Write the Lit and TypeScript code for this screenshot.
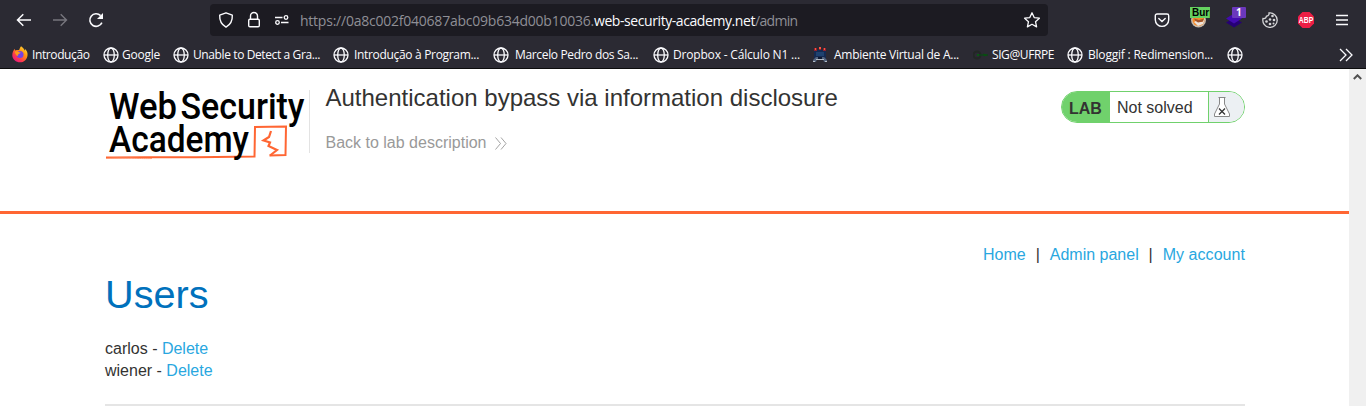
import { LitElement, html, css } from "lit";
import { customElement } from "lit/decorators.js";

const globe = html`<svg width="16" height="16" viewBox="0 0 16 16" fill="none" stroke="#fbfbfe" stroke-width="1.3">
  <circle cx="8" cy="8" r="7" /><ellipse cx="8" cy="8" rx="3.3" ry="7" /><path d="M1 8h14" /></svg>`;

const firefox = html`<svg width="16" height="17" viewBox="0.5 0 16 17">
  <defs><linearGradient id="ff" x1="1" y1="0" x2="0.2" y2="1"><stop offset="0" stop-color="#fff44f" /><stop offset=".4" stop-color="#ff980e" /><stop offset=".75" stop-color="#ff3750" /><stop offset="1" stop-color="#e31587" /></linearGradient></defs>
  <path d="M9.6.3C12 2 12.7 3.200 12.800 4.500c.7-.3.6-1.200.5-1.700C15.500 4.500 16.300 6.900 16 9.400 15.500 13.400 12.400 16.300 8.500 16.300S.8 13.200.8 9.200c0-2.800 1.200-5 2.500-6.500 0 .8.100 1.300.5 1.700C4.800 4 6.600 4 7.600 4.100 8.200 2.500 8.600 1.300 9.600.3z" fill="url(#ff)" />
  <circle cx="8.500" cy="8.500" r="3.500" fill="#7542e5" /><path d="M3.200 5.500c1.600-.7 3.400-.3 4.600.7l1.500.4c-.3 1-1.700 1-2.300 1.500-.5.5 0 1.400-.9 2C4.800 9.500 3.500 7.500 3.200 5.500z" fill="#ff9a1a" /></svg>`;

const robot = html`<svg width="16" height="16" viewBox="0 0 16 16">
  <path d="M2 3h12v9H2z" fill="#152b52" /><path d="M4 5h8v4H4z" fill="#1f426f" />
  <path d="M2 1h3v3H2zM7 0h2v3H7zM11 1h3v3h-3z" fill="#8f2430" /><path d="M3 1h1v2H3zM7 0h2v2H7zM12 1h1v2h-1z" fill="#ff5340" />
  <path d="M1 13l3-3h8l3 3v2h-3l-1-3H5l-1 3H1z" fill="#53637d" /><path d="M4 12h8v1H4zM1 14h2v1H1zM13 14h2v1h-2z" fill="#b3bcc5" /><path d="M6 10h4v2H6z" fill="#101a32" /></svg>`;

const sig = html`<svg width="16" height="16" viewBox="0 0 16 16"><circle cx="4" cy="8" r="3.500" fill="none" stroke="#222725" stroke-width="2" /><path d="M4 8h11" stroke="#10421b" stroke-width="1.500" /><circle cx="5" cy="8" r="1" fill="#07600f" /><path d="M10 6.500l5 1.500-4 1.500z" fill="#07500f" /></svg>`;

const bookmarks = [
  { icon: firefox, label: "Introdução", width: 91, gap: 4, text: 57.5 },
  { icon: globe, label: "Google", width: 70, gap: 3, text: 38 },
  { icon: globe, label: "Unable to Detect a Gra...", width: 160, gap: 4, text: 127 },
  { icon: globe, label: "Introdução à Program...", width: 160, gap: 5, text: 125 },
  { icon: globe, label: "Marcelo Pedro dos Sa...", width: 160, gap: 6, text: 123 },
  { icon: globe, label: "Dropbox - Cálculo N1 ...", width: 159, gap: 4, text: 127 },
  { icon: robot, label: "Ambiente Virtual de A...", width: 161, gap: 6, text: 125 },
  { icon: sig, label: "SIG@UFRPE", width: 94, gap: 3, text: 62 },
  { icon: globe, label: "Bloggif : Redimension...", width: 160, gap: 5, text: 125 },
  { icon: globe, label: "", width: 20, gap: 0, text: 0 },
];

@customElement("browser-toolbar")
class BrowserToolbar extends LitElement {
  static styles = css`
    :host { display: block; height: 69px; background: #2b2a33; color: #fbfbfe; font-family: "Open Sans", "Noto Sans", sans-serif; box-sizing: border-box; border-bottom: 1px solid #0c0c0d; }
    svg { display: block; flex: none; }
    .top { height: 40px; display: flex; align-items: center; padding: 0 15px; box-sizing: border-box; }
    .nav { display: flex; gap: 18px; width: 195px; }
    .url { display: flex; align-items: center; height: 32px; width: 838px; box-sizing: border-box; background: #1c1b22; border-radius: 4px; padding: 0 7px; }
    .marks { display: flex; gap: 10px; width: 83px; }
    .address { flex: 1; display: flex; font-size: 14px; font-stretch: 96%; line-height: 20px; padding-top: 2px; white-space: pre; color: #8f8f96; }
    .address .host { color: #fbfbfe; }
    .ext { display: flex; gap: 18px; margin-left: auto; align-items: center; height: 32px; }
    .wide { overflow: visible; }
    .books { display: flex; height: 28px; align-items: center; padding: 1px 0 0 12px; box-sizing: border-box; }
    .book { display: flex; align-items: center; flex: none; white-space: pre; font-size: 12px; font-stretch: 91%; line-height: 16px; }
    .book span { padding-top: 1px; }
    .more { margin-left: auto; padding-right: 13px; }
  `;

  firstUpdated() {
    this.renderRoot.querySelectorAll<HTMLElement>("[data-fit]").forEach((el) => {
      const goal = Number(el.dataset.fit);
      const count = el.textContent!.length;
      if (goal && count) el.style.letterSpacing = `${(goal - el.getBoundingClientRect().width) / count}px`;
    });
  }

  render() {
    return html`
      <div class="top">
        <div class="nav">
          <svg width="18" height="18" viewBox="0 0 18 18" fill="none" stroke="#fbfbfe" stroke-width="1.500"><path d="M16 9H2.500M8.300 3.200L2.500 9l5.800 5.800" /></svg>
          <svg width="18" height="18" viewBox="0 0 18 18" fill="none" stroke="#77767e" stroke-width="1.400"><path d="M2 9h13.500M9.700 3.200L15.500 9l-5.800 5.800" /></svg>
          <svg width="18" height="18" viewBox="0 0 18 18" fill="none" stroke="#fbfbfe" stroke-width="1.600"><path d="M14.900 11.600a6.300 6.300 0 1 1-1.300-7" /><path d="M16 2v6h-6z" fill="#fbfbfe" stroke="none" /></svg>
        </div>
        <div class="url">
          <div class="marks">
            <svg width="18" height="18" viewBox="0 0 18 18" fill="none" stroke="#fbfbfe" stroke-width="1.400"><path d="M9 1.800l6.300 2.400c.3 5.300-2 9.400-6.300 12-4.300-2.600-6.600-6.700-6.300-12z" stroke-linejoin="round" /></svg>
            <svg width="18" height="18" viewBox="0 0 18 18" fill="none" stroke="#fbfbfe" stroke-width="1.400"><rect x="3.700" y="8.300" width="10.600" height="7.400" rx="1.200" /><path d="M5.500 8V5a3.500 3.500 0 0 1 7 0v3" /></svg>
            <svg width="18" height="18" viewBox="0 0 18 18" fill="none" stroke="#fbfbfe" stroke-width="1.300"><path d="M2 6.500h7.500M8 11.500h7.500" /><circle cx="13" cy="6.500" r="1.800" /><circle cx="4.500" cy="11.500" r="1.800" /></svg>
          </div>
          <div class="address"><span data-fit="294">https://0a8c002f040687abc09b634d00b10036.</span><span class="host" data-fit="161">web-security-academy.net</span><span data-fit="42.500">/admin</span></div>
          <svg width="18" height="18" viewBox="0 0 18 18" fill="none" stroke="#fbfbfe" stroke-width="1.300"><path d="M9 1.800l2.200 4.800 5.200.6-3.900 3.500 1.100 5.200L9 13.300l-4.600 2.600 1.100-5.200-3.900-3.500 5.200-.6z" stroke-linejoin="round" /></svg>
        </div>
        <div class="ext">
          <svg width="18" height="18" viewBox="0 0 18 18" fill="none" stroke="#fbfbfe" stroke-width="1.400"><path d="M4 3h10a1.700 1.700 0 0 1 1.700 1.700v4a6.700 6.700 0 0 1-13.400 0v-4A1.700 1.700 0 0 1 4 3z" /><path d="M5.800 7.500L9 10.500l3.200-3" stroke-linecap="round" /></svg>
          <svg class="wide" width="18" height="26" viewBox="-1 3 18 26"><defs><clipPath id="tag"><rect y="3" width="20" height="11" /></clipPath></defs><circle cx="8.500" cy="16" r="7.500" fill="#c7b9a9" /><circle cx="8.500" cy="16" r="6" fill="#f68a2b" /><path d="M4 18l2-1 6 1 3-4-2 6-5 2z" fill="#eee4dc" /><path d="M4 14.500l5 1.500 5-1.500-1 3-5 1-3-2z" fill="#a0532a" /><rect y="3" width="20" height="11" fill="#65d160" /><text x="2" y="12" font-family="Liberation Sans" font-weight="700" font-size="10" fill="#000" clip-path="url(#tag)">Burp</text></svg>
          <svg class="wide" width="18" height="26" viewBox="-1 3 18 26"><path d="M0 18.500l8-4.500 8 4.500-8 5z" fill="#260075" /><path d="M0 14.500l8-5 8 5-8 5z" fill="#430bb0" /><rect x="6" y="3" width="14" height="11" rx="1" fill="#6b38bd" /><text x="10" y="12" font-family="Noto Sans" font-size="10" font-weight="700" fill="#fff">1</text></svg>
          <svg width="18" height="18" viewBox="0 0 18 18" fill="none" stroke="#d5d5d8" stroke-width="1.300"><path d="M8 2a7.200 7.200 0 1 1-6 5.500 3 3 0 0 0 3.500-2.300A2.600 2.600 0 0 0 8 2z" /><g fill="#d5d5d8" stroke="none"><circle cx="11.500" cy="5" r="1.300" /><circle cx="5.500" cy="10.500" r="1.300" /><circle cx="9" cy="8.500" r="1.300" /><circle cx="9" cy="13" r="1.300" /><circle cx="13" cy="9" r="1.300" /><circle cx="12.500" cy="12.500" r="1" /></g></svg>
          <svg class="wide" width="18" height="18" viewBox="0 0 18 18"><path d="M5.500 1h7L17 5.500v7L12.500 17h-7L1 12.500v-7z" fill="#ed1e45" /><text x="1.800" y="12.200" font-family="Liberation Sans" font-size="8.500" font-weight="700" fill="#fff" textLength="14.400" lengthAdjust="spacingAndGlyphs">ABP</text></svg>
          <svg width="18" height="18" viewBox="0 0 18 18" stroke="#fbfbfe" stroke-width="1.300"><path d="M3 4.500h12M3 9h12M3 13.500h12" /></svg>
        </div>
      </div>
      <div class="books">
        ${bookmarks.map((b) => html`<div class="book" style="width:${b.width}px;gap:${b.gap}px">${b.icon}<span data-fit=${b.text}>${b.label}</span></div>`)}
        <svg class="more" width="14" height="14" viewBox="0 0 14 14" fill="none" stroke="#fbfbfe" stroke-width="1.300"><path d="M1 1l6 6-6 6M7 1l6 6-6 6" /></svg>
      </div>`;
  }
}

@customElement("academy-logo")
class AcademyLogo extends LitElement {
  static styles = css`
    :host { display: block; width: 204px; height: 80px; }
    svg { display: block; overflow: visible; }
    text { font-family: Roboto, sans-serif; font-weight: 500; font-size: 37.5px; fill: #000; }
  `;
  render() {
    return html`<svg width="204" height="80" viewBox="0 -4 204 80">
      <path d="M1 72.500C40 71.500 70 73 149.500 71.500L150 42l31-.5-.500 28.500-16 .5" fill="none" stroke="#ff6633" stroke-width="2" />
      <path d="M1 73.500c25-1 35 .5 46 0" fill="none" stroke="#ff9b78" stroke-width="1" />
      <path d="M166 46l-2 6-5.500 3.500 6.500 2-1.500 3.500 8.500 4-7 5.500" fill="none" stroke="#ff6633" stroke-width="2.200" />
      <text x="4" y="34.200" textLength="68" lengthAdjust="spacingAndGlyphs">Web</text>
      <text x="75.500" y="34.200" textLength="124" lengthAdjust="spacingAndGlyphs">Security</text>
      <text x="4" y="67" textLength="140" lengthAdjust="spacingAndGlyphs">Academy</text>
    </svg>`;
  }
}

@customElement("app-root")
class AppRoot extends LitElement {
  static styles = css`
    :host { display: block; height: 406px; overflow: hidden; background: #fff; font: 16px/22px "Liberation Sans", Arial, sans-serif; color: #333332; }
    .view { display: flex; height: 337px; }
    .page { width: 1349px; }
    .scroll { flex: 1; background: #f0f0f0; display: flex; justify-content: center; padding-top: 5px; }
    header { height: 142px; border-bottom: 3px solid #ff6633; padding: 0 104px 0 105px; display: flex; align-items: flex-start; }
    academy-logo { margin-top: 12px; }
    .titles { margin-top: 21px; height: 63px; border-left: 1px solid #e3e3e3; padding-left: 15.500px; box-sizing: border-box; }
    h2 { margin: -5px 0 21px; font-size: 24px; line-height: 26px; font-weight: 400; white-space: nowrap; }
    .back { display: flex; align-items: center; gap: 9px; color: #999; }
    .status { margin: 22px 0 0 auto; display: flex; width: 184px; height: 32px; box-sizing: border-box; border: 1px solid #70d16c; border-radius: 16px; overflow: hidden; line-height: 31px; }
    .lab { width: 48px; background: #70d16c; font-weight: 700; padding-left: 7px; box-sizing: border-box; line-height: 33px; }
    .state { width: 98px; padding-left: 7px; box-sizing: border-box; }
    .flask { flex: 1; border-left: 1px solid #70d16c; background: #ecf0f3; padding: 5px 0 0 5px; }
    main { padding: 32px 104px 0 105px; }
    nav { display: flex; justify-content: flex-end; line-height: 18px; }
    .bar { width: 24px; text-align: center; }
    a { color: #29a7df; }
    nav a:last-child { letter-spacing: .05px; }
    h1 { margin: 6px 0 20px; font-size: 39.700px; line-height: 48px; font-weight: 400; color: #0071bc; }
    .rule { height: 4px; background: #e5e5e5; margin-top: 22px; }
    svg { display: block; }
  `;
  render() {
    return html`
      <browser-toolbar></browser-toolbar>
      <div class="view">
        <div class="page">
          <header>
            <academy-logo></academy-logo>
            <div class="titles">
              <h2>Authentication bypass via information disclosure</h2>
              <div class="back">Back to lab description
                <svg width="12" height="13" viewBox="0 0 12 13" fill="none" stroke="#999" stroke-width=".9"><path d="M.5.5l5 6-5 6M6 .5l5 6-5 6" /></svg>
              </div>
            </div>
            <div class="status">
              <div class="lab">LAB</div><div class="state">Not solved</div>
              <div class="flask"><svg width="16" height="20" viewBox="0 0 16 20" fill="none" stroke="#888" stroke-width="1"><path d="M4.500.5h7M5.500.5V7L.5 17v2.500h15V17L10.500 7V.5" fill="#fff" /><path d="M5 11.500l6 6M11 11.500l-6 6" stroke="#333" stroke-width="1.300" /></svg></div>
            </div>
          </header>
          <main>
            <nav><a>Home</a><span class="bar">|</span><a>Admin panel</a><span class="bar">|</span><a>My account</a></nav>
            <h1>Users</h1>
            <div>carlos - <a>Delete</a></div>
            <div>wiener - <a>Delete</a></div>
            <div class="rule"></div>
          </main>
        </div>
        <div class="scroll"><svg width="9" height="6" viewBox="0 0 9 6" fill="none" stroke="#505050" stroke-width="2"><path d="M.8 5l3.700-3.700L8.200 5" /></svg></div>
      </div>`;
  }
}
